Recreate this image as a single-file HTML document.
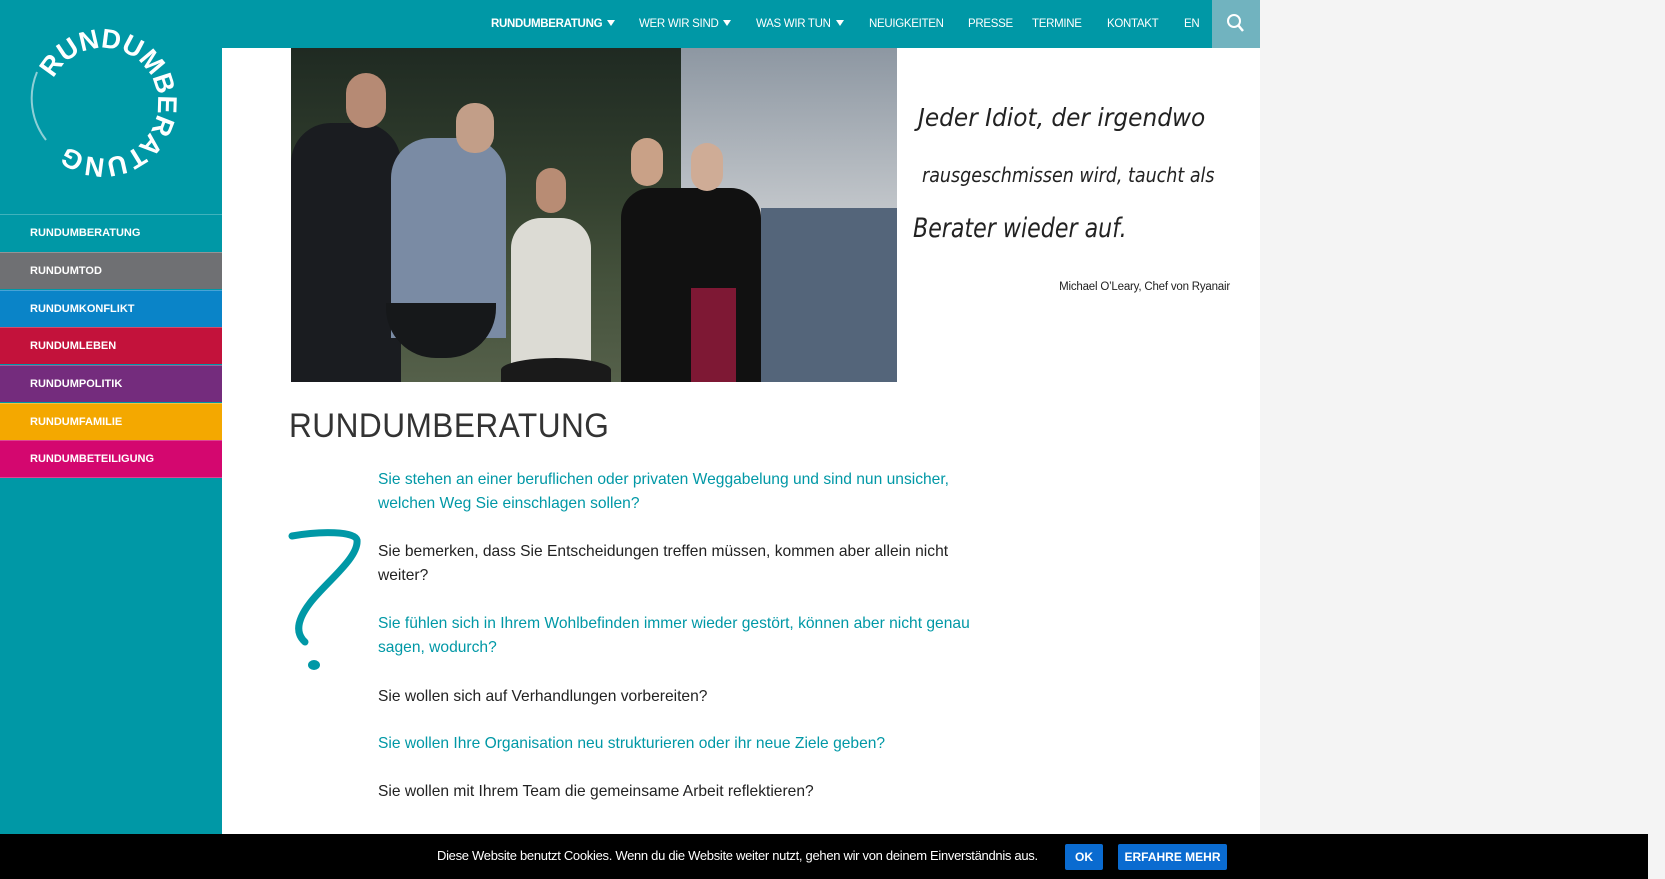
<!DOCTYPE html>
<html><head><meta charset="utf-8"><style>
*{margin:0;padding:0;box-sizing:border-box}
body{width:1665px;height:879px;overflow:hidden;background:#f4f4f4;font-family:"Liberation Sans",sans-serif;position:relative}
#side{position:absolute;left:0;top:0;width:222px;height:879px;background:#0098a6}
#main{position:absolute;left:222px;top:48px;width:1038px;height:831px;background:#fff}
#top{position:absolute;left:222px;top:0;width:1038px;height:48px;background:#0098a6}
.nav{position:absolute;top:0;height:48px;line-height:48px;color:#fff;font-size:11.5px;letter-spacing:-0.3px;white-space:nowrap}
.nav b{font-weight:bold}
.tri{display:inline-block;width:0;height:0;border-left:4.5px solid transparent;border-right:4.5px solid transparent;border-top:6px solid #fff;margin-left:5px;vertical-align:1px}
#search{position:absolute;left:1212px;top:0;width:48px;height:48px;background:#71b3bf}
.menu{position:absolute;left:0;width:222px;height:37px;color:#fff;font-size:11px;font-weight:bold;padding-left:30px;line-height:37px;border-top:1px solid rgba(255,255,255,.25)}
.p{position:absolute;left:378px;width:610px;font-size:15.6px;line-height:24.4px;color:#222}
.p.c{color:#0098a6}
#cookie{position:absolute;left:0;top:834px;width:1648px;height:45px;background:#000;color:#fff;font-size:13px}
.btn{position:absolute;top:10px;height:26px;line-height:26px;background:#0a6bd0;color:#fff;font-size:12px;font-weight:bold;text-align:center;border-radius:2px}
.q{position:absolute;white-space:nowrap;font-family:"DejaVu Sans",sans-serif;font-style:italic;font-weight:200;color:#222;transform-origin:left top}
</style></head><body>
<div id="side">
<svg width="222" height="210" style="position:absolute;left:0;top:0">
<defs><path id="c" d="M48,103 A55,55 0 1,1 158,103 A55,55 0 1,1 48,103"/></defs>
<path d="M37,72 A68,68 0 0,0 46,140" stroke="#8fcfd6" stroke-width="2" fill="none"/>
<text font-family="Liberation Sans" font-weight="bold" font-size="27" fill="#fff"><textPath href="#c" startOffset="25" textLength="272" lengthAdjust="spacing">RUNDUMBERATUNG</textPath></text>
</svg>
<div class="menu" style="top:214px;background:#0098a6">RUNDUMBERATUNG</div>
<div class="menu" style="top:252px;background:#6f7073">RUNDUMTOD</div>
<div class="menu" style="top:290px;background:#0a84c8">RUNDUMKONFLIKT</div>
<div class="menu" style="top:327px;background:#c3123b">RUNDUMLEBEN</div>
<div class="menu" style="top:365px;background:#742c7d">RUNDUMPOLITIK</div>
<div class="menu" style="top:403px;background:#f4a800">RUNDUMFAMILIE</div>
<div class="menu" style="top:440px;background:#d4076f;border-bottom:1px solid rgba(255,255,255,.25);height:38px">RUNDUMBETEILIGUNG</div>
</div>
<div id="top"></div>
<div class="nav" style="left:491px"><b>RUNDUMBERATUNG</b><span class="tri"></span></div>
<div class="nav" style="left:639px">WER WIR SIND<span class="tri"></span></div>
<div class="nav" style="left:756px">WAS WIR TUN<span class="tri"></span></div>
<div class="nav" style="left:869px">NEUIGKEITEN</div>
<div class="nav" style="left:968px">PRESSE</div>
<div class="nav" style="left:1032px">TERMINE</div>
<div class="nav" style="left:1107px">KONTAKT</div>
<div class="nav" style="left:1184px">EN</div>
<div id="search"><svg width="48" height="48"><circle cx="22" cy="21" r="6" stroke="#fff" stroke-width="2" fill="none"/><path d="M26,25 L31,31" stroke="#fff" stroke-width="2.5"/></svg></div>
<div id="main"></div>
<div style="position:absolute;left:291px;top:48px;width:606px;height:334px;overflow:hidden;background:linear-gradient(180deg,#1f2a22 0%,#34412f 45%,#45523c 70%,#55604a 100%)">
<div style="position:absolute;left:390px;top:0;width:216px;height:170px;background:linear-gradient(180deg,#8d97a2,#c4c8cc)"></div>
<div style="position:absolute;left:470px;top:160px;width:136px;height:174px;background:#54657a"></div>
<div style="position:absolute;left:0;top:75px;width:110px;height:259px;background:#1a1c20;border-radius:40px 40px 0 0"></div>
<div style="position:absolute;left:55px;top:25px;width:40px;height:55px;background:#b68a74;border-radius:20px"></div>
<div style="position:absolute;left:100px;top:90px;width:115px;height:200px;background:#7a8ba4;border-radius:40px 40px 0 0"></div>
<div style="position:absolute;left:165px;top:55px;width:38px;height:50px;background:#c29e88;border-radius:18px"></div>
<div style="position:absolute;left:220px;top:170px;width:80px;height:164px;background:#dcdbd4;border-radius:30px 30px 0 0"></div>
<div style="position:absolute;left:245px;top:120px;width:30px;height:45px;background:#b88c74;border-radius:15px"></div>
<div style="position:absolute;left:330px;top:140px;width:140px;height:194px;background:#111;border-radius:30px 30px 0 0"></div>
<div style="position:absolute;left:400px;top:240px;width:45px;height:94px;background:#7e1834"></div>
<div style="position:absolute;left:340px;top:90px;width:32px;height:48px;background:#c9a187;border-radius:16px"></div>
<div style="position:absolute;left:400px;top:95px;width:32px;height:48px;background:#cfac96;border-radius:16px"></div>
<div style="position:absolute;left:95px;top:255px;width:110px;height:55px;background:#16181a;border-radius:0 0 50px 50px"></div>
<div style="position:absolute;left:210px;top:310px;width:110px;height:24px;background:#1a1a1a;border-radius:50% 50% 0 0"></div>
</div>
<div class="q" style="left:918px;top:103px;font-size:25px;transform:scaleX(.93)">Jeder Idiot, der irgendwo</div>
<div class="q" style="left:922px;top:163px;font-size:20px;transform:scaleX(.875)">rausgeschmissen wird, taucht als</div>
<div class="q" style="left:913px;top:213px;font-size:27px;transform:scaleX(.82)">Berater wieder auf.</div>
<div style="position:absolute;left:1000px;top:281px;width:230px;text-align:right;font-size:11.5px;color:#222;letter-spacing:-0.2px">Michael O’Leary, Chef von Ryanair</div>
<div style="position:absolute;left:289px;top:407px;font-size:34px;font-weight:normal;color:#333;letter-spacing:.5px;transform:scaleX(.93);transform-origin:left">RUNDUMBERATUNG</div>
<svg width="90" height="150" style="position:absolute;left:285px;top:528px">
<path d="M7,8 C35,3 70,3 72,12 C74,30 40,55 25,75 C12,92 10,105 20,114" stroke="#0098a6" stroke-width="7" fill="none" stroke-linecap="round"/>
<ellipse cx="29" cy="137" rx="6" ry="5" fill="#0098a6"/>
</svg>
<div class="p c" style="top:468px">Sie stehen an einer beruflichen oder privaten Weggabelung und sind nun unsicher,<br>welchen Weg Sie einschlagen sollen?</div>
<div class="p" style="top:540px">Sie bemerken, dass Sie Entscheidungen treffen müssen, kommen aber allein nicht<br>weiter?</div>
<div class="p c" style="top:612px">Sie fühlen sich in Ihrem Wohlbefinden immer wieder gestört, können aber nicht genau<br>sagen, wodurch?</div>
<div class="p" style="top:685px">Sie wollen sich auf Verhandlungen vorbereiten?</div>
<div class="p c" style="top:732px">Sie wollen Ihre Organisation neu strukturieren oder ihr neue Ziele geben?</div>
<div class="p" style="top:780px">Sie wollen mit Ihrem Team die gemeinsame Arbeit reflektieren?</div>
<div id="cookie">
<div style="position:absolute;left:437px;top:0;line-height:44px;letter-spacing:-0.3px">Diese Website benutzt Cookies. Wenn du die Website weiter nutzt, gehen wir von deinem Einverständnis aus.</div>
<div class="btn" style="left:1065px;width:38px">OK</div>
<div class="btn" style="left:1118px;width:109px">ERFAHRE MEHR</div>
</div>
</body></html>
